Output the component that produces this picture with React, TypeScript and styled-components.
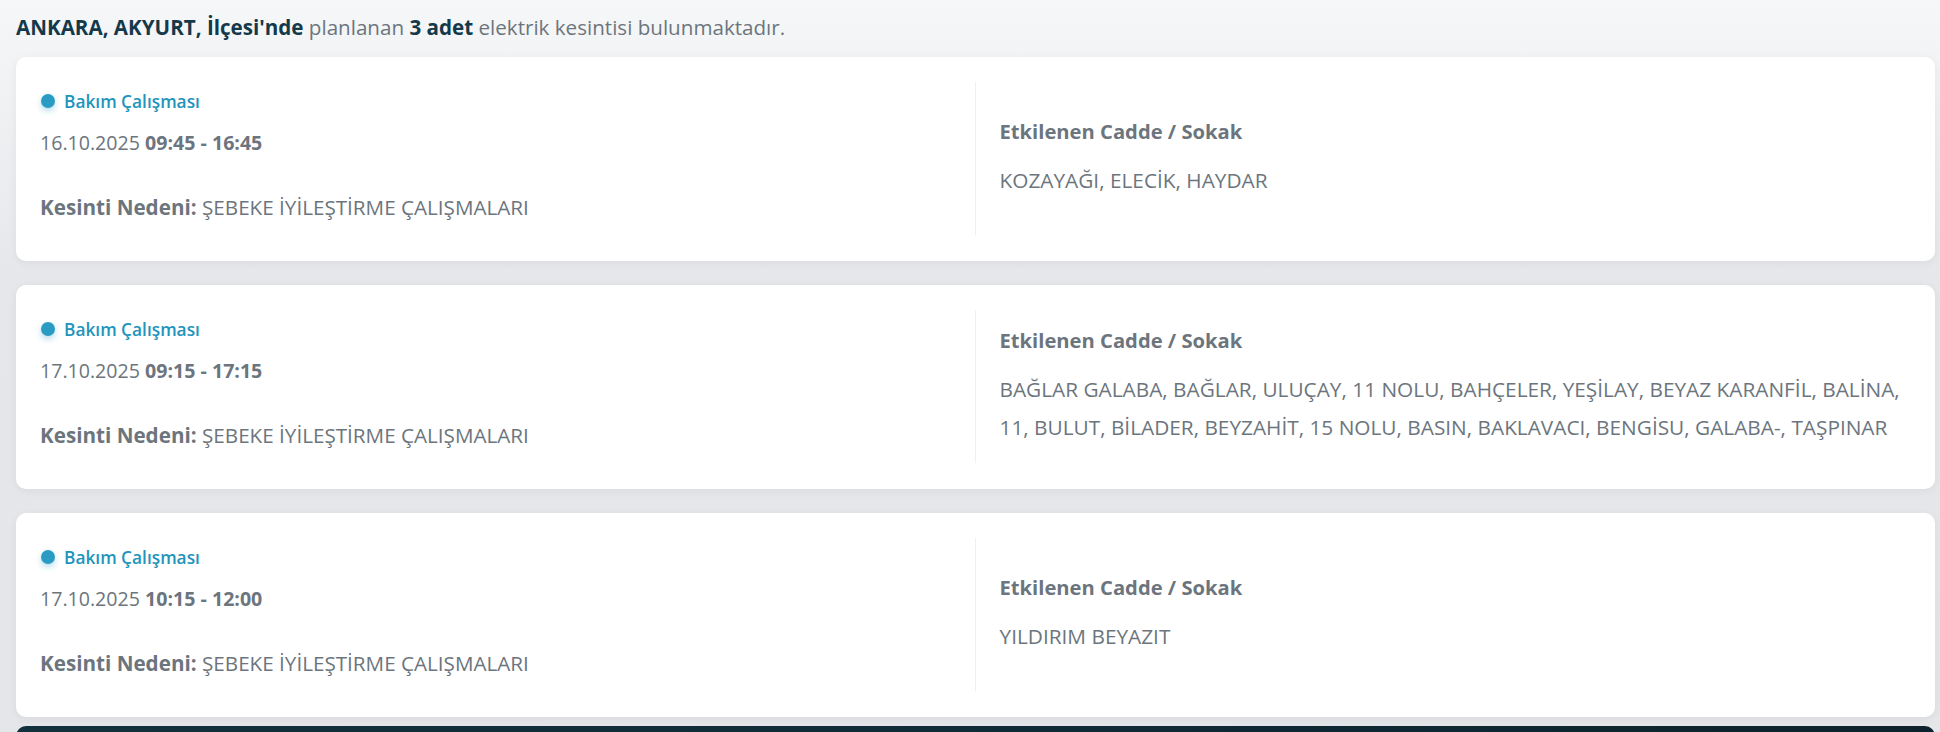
import React from "react";
import styled, { createGlobalStyle } from "styled-components";

const GlobalStyle = createGlobalStyle`
  html, body { margin: 0; padding: 0; }
  body {
    font-family: "Open Sans", "Noto Sans", Arial, sans-serif;
    background: #e5e7ea;
  }
  * { box-sizing: border-box; }
`;

const Page = styled.div`
  min-height: 100vh;
  padding: 13px 5px 0 16px;
  background: linear-gradient(180deg, #f6f7f9 0px, #eef0f2 120px, #e5e7ea 280px, #e4e6e9 100%);
  overflow: hidden;
`;

const Summary = styled.p`
  margin: 0 0 16px 0;
  font-size: 20.6px;
  line-height: 28px;
  color: #6c757d;
  white-space: nowrap;
`;

const Strong = styled.strong`
  font-weight: 700;
  color: #14394a;
`;

const List = styled.div`
  display: flex;
  flex-direction: column;
  gap: 24px;
`;

const Card = styled.section`
  display: grid;
  grid-template-columns: 1fr 1fr;
  padding: 25px 0 26px 0;
  background: #ffffff;
  border-radius: 10px;
  box-shadow: 0 2px 10px rgba(30, 40, 50, 0.06);
`;

const LeftCol = styled.div`
  display: flex;
  flex-direction: column;
  padding: 9px 24px 15px 24px;
  border-right: 1px solid #eef0f2;
`;

const Badge = styled.div`
  display: flex;
  align-items: center;
  gap: 9px;
  height: 20px;
  padding-left: 1px;
  font-size: 17.3px;
  font-weight: 600;
  color: #2294bb;
`;

const Dot = styled.span`
  width: 14px;
  height: 14px;
  border-radius: 50%;
  background: #2a9bc3;
  box-shadow: 0 3px 6px rgba(42, 155, 195, 0.35);
  flex: none;
`;

const DateLine = styled.div`
  margin-top: 19px;
  font-size: 19.6px;
  line-height: 26px;
  color: #6c757d;
`;

const Bold = styled.b`
  font-weight: 700;
`;

const Reason = styled.div`
  margin-top: 38px;
  font-size: 20.65px;
  line-height: 26px;
  color: #6c757d;
  white-space: nowrap;
`;

const RightCol = styled.div`
  display: flex;
  flex-direction: column;
  justify-content: center;
  padding: 0 24px 0 24px;
`;

const Heading = styled.div`
  font-size: 20.2px;
  font-weight: 700;
  line-height: 26px;
  color: #6c757d;
`;

const Streets = styled.div`
  margin-top: 17px;
  font-size: 20.8px;
  line-height: 38px;
  color: #6c757d;
`;

const Footer = styled.footer`
  margin-top: 9px;
  height: 60px;
  border-radius: 10px 10px 0 0;
  background: linear-gradient(90deg, #12313d 0%, #0f2a35 60%, #0d222c 100%);
`;

type Outage = {
  date: string;
  start: string;
  end: string;
  reason: string;
  streets: string;
};

const outages: Outage[] = [
  {
    date: "16.10.2025",
    start: "09:45",
    end: "16:45",
    reason: "ŞEBEKE İYİLEŞTİRME ÇALIŞMALARI",
    streets: "KOZAYAĞI, ELECİK, HAYDAR",
  },
  {
    date: "17.10.2025",
    start: "09:15",
    end: "17:15",
    reason: "ŞEBEKE İYİLEŞTİRME ÇALIŞMALARI",
    streets:
      "BAĞLAR GALABA, BAĞLAR, ULUÇAY, 11 NOLU, BAHÇELER, YEŞİLAY, BEYAZ KARANFİL, BALİNA, 11, BULUT, BİLADER, BEYZAHİT, 15 NOLU, BASIN, BAKLAVACI, BENGİSU, GALABA-, TAŞPINAR",
  },
  {
    date: "17.10.2025",
    start: "10:15",
    end: "12:00",
    reason: "ŞEBEKE İYİLEŞTİRME ÇALIŞMALARI",
    streets: "YILDIRIM BEYAZIT",
  },
];

const OutageCard: React.FC<{ item: Outage }> = ({ item }) => (
  <Card>
    <LeftCol>
      <Badge>
        <Dot />
        Bakım Çalışması
      </Badge>
      <DateLine>
        {item.date}{" "}
        <Bold>
          {item.start} - {item.end}
        </Bold>
      </DateLine>
      <Reason>
        <Bold>Kesinti Nedeni:</Bold> {item.reason}
      </Reason>
    </LeftCol>
    <RightCol>
      <Heading>Etkilenen Cadde / Sokak</Heading>
      <Streets>{item.streets}</Streets>
    </RightCol>
  </Card>
);

export default function App() {
  return (
    <>
      <GlobalStyle />
      <Page>
        <Summary>
          <Strong>ANKARA, AKYURT, İlçesi'nde</Strong> planlanan{" "}
          <Strong>3 adet</Strong> elektrik kesintisi bulunmaktadır.
        </Summary>
        <List>
          {outages.map((o, i) => (
            <OutageCard key={i} item={o} />
          ))}
        </List>
        <Footer />
      </Page>
    </>
  );
}
